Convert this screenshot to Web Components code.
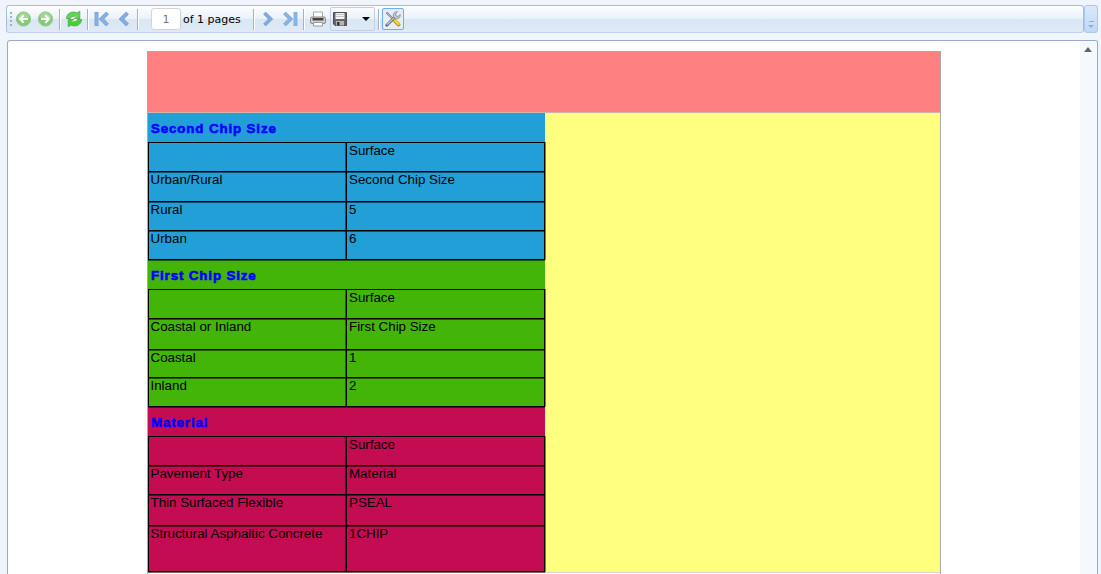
<!DOCTYPE html>
<html lang="en">
<head>
<meta charset="utf-8">
<title>Report Viewer</title>
<style>
    html, body {
        height: 100%;
        margin: 0;
        overflow: hidden;
    }
</style>
</head>
<body>
<report-viewer>
    <viewer-toolbar slot="toolbar"></viewer-toolbar>
    <report-page>
        <chip-table heading="Second Chip Size" color="#219fd6" rows="29 30 29 29"
            cells="|Surface|Urban/Rural|Second Chip Size|Rural|5|Urban|6"></chip-table>
        <chip-table heading="First Chip Size" color="#43b408" rows="29 31 28 29"
            cells="|Surface|Coastal or Inland|First Chip Size|Coastal|1|Inland|2"></chip-table>
        <chip-table heading="Material" color="#c40c53" rows="29 29 31 46"
            cells="|Surface|Pavement Type|Material|Thin Surfaced Flexible|PSEAL|Structural Asphaltic Concrete|1CHIP"></chip-table>
    </report-page>
</report-viewer>

<script>
const ICONS = {
    back: `<circle cx="7.5" cy="8" r="7.1" fill="#83cc72" stroke="#9cc29c"/><path d="M2 7a5.5 5.5 0 0 1 11 0z" fill="#a0d890"/><path d="M12 8H4.500M7.700 4.200L4 8l3.700 3.800" fill="none" stroke="#fff" stroke-width="2"/>`,
    forward: `<circle cx="7.5" cy="8" r="7.1" fill="#83cc72" stroke="#9cc29c"/><path d="M2 7a5.5 5.500 0 0 1 11 0z" fill="#a0d890"/><path d="M3 8h7.500M7.300 4.200L11 8l-3.700 3.800" fill="none" stroke="#fff" stroke-width="2"/>`,
    refresh: `<path d="M.5 7.500C.5 2.500 6-.5 11 2l2.800-1.800V7.500H7.500l2-2C7.500 4.700 5 5.200 4.300 7.500z" fill="#5cdb4a" stroke="#5fa562" stroke-width=".9"/><path d="M15.500 8.500c0 5-5.500 8-10.500 5.500l-2.800 1.800V8.500h6.300l-2 2c2 .8 4.500.3 5.200-2z" fill="#3fd52c" stroke="#5fa562" stroke-width=".9"/><path d="M5.500 7.500h2.200l2-2M10.500 8.500H8.300l-2 2" fill="none" stroke="#fff"/>`,
    first: `<path d="M2.500 1v14M13.500 2L7.500 8l6 6" fill="none" stroke="#7391bd" stroke-width="3.800"/><path d="M2.500 1.500v13M13.500 2L7.500 8l6 6" fill="none" stroke="#86b1e5" stroke-width="2.600"/>`,
    prev: `<path d="M11.500 2L5.500 8l6 6" fill="none" stroke="#6a8cbf" stroke-width="3.800"/><path d="M11.500 2L5.500 8l6 6" fill="none" stroke="#82b0e8" stroke-width="2.600"/>`,
    next: `<path d="M4.500 2l6 6l-6 6" fill="none" stroke="#8fa3c1" stroke-width="3.800"/><path d="M4.500 2l6 6l-6 6" fill="none" stroke="#7aace5" stroke-width="2.700"/>`,
    last: `<path d="M13.500 1v14M2.500 2l6 6l-6 6" fill="none" stroke="#8fa3c1" stroke-width="3.800"/><path d="M13.500 1.500v13M2.500 2l6 6l-6 6" fill="none" stroke="#84b5ea" stroke-width="2.700"/>`,
    print: `<path d="M3.500 1h9v6h-9z" fill="#fff" stroke="#aaa"/><rect x=".5" y="6" width="15" height="6.500" rx="1.500" fill="#d4d1ce" stroke="#888"/><path d="M2.500 7h11v2.500h-11z" fill="#444"/><path d="M3.500 11.500h9V15h-9z" fill="#fff" stroke="#999"/>`,
    save: `<path d="M1.500 1.500h13v13H3l-1.500-1.500z" fill="#666" stroke="#4c4c4c"/><path d="M3.500 2h9v6h-9z" fill="#f4f4f4"/><path d="M4 3.500h8M4 5.500h8" stroke="#c4c4c4"/><path d="M4 10h8v4.500H4z" fill="#b5b5b5"/><path d="M5 11h2.500v3.500H5z" fill="#333"/>`,
    tools: `<path d="M1.500 1.500L8.500 8.500" stroke="#777" stroke-width="1.800"/><path d="M2 2l6.500 6.500" stroke="#ddd" stroke-width=".7"/><path d="M9.500 9.500l4 4" stroke="#a48820" stroke-width="3.800" stroke-linecap="round"/><path d="M9.700 9.300l3.800 3.800" stroke="#ffd428" stroke-width="2.400" stroke-linecap="round"/><path d="M1.800 14.200L10 6" stroke="#666" stroke-width="2.800" stroke-linecap="round"/><path d="M2 13.800L10 6" stroke="#c9c9c9" stroke-width="1.200"/><path d="M12.500.8a3.500 3.500 0 0 0-4 4.700L10.500 7.500a3.500 3.500 0 0 0 4.700-4L13 5.500 11 5l-.5-2z" fill="#ccc" stroke="#888" stroke-width=".8"/>`
}

class ToolIcon extends HTMLElement {
    constructor() {
        super();
        this.attachShadow({ mode: 'open' })
    }

    connectedCallback() {
        this.shadowRoot.innerHTML = `
            <style>
                :host { display: block; flex: none; width: 16px; height: 16px; }
                svg { display: block; width: 100%; height: 100%; }
            </style>
            <svg viewBox="0 0 16 16" aria-hidden="true">${ICONS[this.getAttribute('name')]}</svg>
        `
    }
}

class ViewerToolbar extends HTMLElement {
    constructor() {
        super();
        this.attachShadow({ mode: 'open' }).innerHTML = `
            <style>
                :host {
                    display: flex;
                    height: 28px;
                    margin-right: 1px;
                    font: 11px "DejaVu Sans", sans-serif;
                    color: #000;
                }
                .bar {
                    flex: 1;
                    box-sizing: border-box;
                    display: flex;
                    align-items: center;
                    border: 1px solid #a9bfd8;
                    border-bottom-color: #bdd2ea;
                    border-radius: 3px;
                    background: linear-gradient(#fdfeff, #eaf2fa 48%, #dae6f3 52%, #dfeaf6);
                }
                .grip {
                    width: 2px;
                    height: 14px;
                    margin: 0 4px 0 3px;
                    background: repeating-linear-gradient(#a0b2ca 0 2px, transparent 2px 4px);
                }
                i {
                    width: 1px;
                    height: 21px;
                    background: #a2b2c8;
                    border-right: 1px solid #fff;
                }
                input {
                    box-sizing: border-box;
                    width: 30px;
                    height: 22px;
                    margin: 0 2px 0 12px;
                    padding: 0;
                    border: 1px solid #d5d5d5;
                    border-radius: 3px;
                    background: #fff;
                    color: #777;
                    font: inherit;
                    text-align: center;
                }
                .save {
                    box-sizing: border-box;
                    display: flex;
                    align-items: center;
                    width: 45px;
                    height: 24px;
                    margin: 0 3px 0 4px;
                    padding-left: 1px;
                    border: 1px solid #bfd0e5;
                    border-radius: 2px;
                }
                .arrow {
                    margin-left: 14px;
                    border: 4px solid transparent;
                    border-top-color: #000;
                    border-bottom: 0;
                }
                .active {
                    box-sizing: border-box;
                    width: 22px;
                    height: 22px;
                    margin-left: 2px;
                    padding: 2px;
                    border: 1px solid #6facf3;
                    border-radius: 2px;
                    background: #e3eefb;
                }
                .overflow {
                    display: flex;
                    flex-direction: column;
                    align-items: center;
                    justify-content: flex-end;
                    box-sizing: border-box;
                    width: 14px;
                    padding-bottom: 4px;
                    gap: 3px;
                    border: 1px solid #a9c6eb;
                    border-radius: 3px;
                    background: linear-gradient(#dbe9fa, #bfd7f7);
                }
                .overflow b { width: 5px; height: 1px; background: #91aed1; }
                .overflow u { border: 3px solid transparent; border-top-color: #91aed1; border-bottom: 0; }
            </style>
            <div class="bar">
                <div class="grip"></div>
                <tool-icon name="back"></tool-icon>
                <tool-icon name="forward" style="margin:0 5px 0 6px"></tool-icon>
                <i></i>
                <tool-icon name="refresh" style="margin:0 5px"></tool-icon>
                <i></i>
                <tool-icon name="first" style="margin:0 6px 0 5px"></tool-icon>
                <tool-icon name="prev" style="margin-right:5px"></tool-icon>
                <i></i>
                <input value="1" aria-label="Page">
                <span>of 1 pages</span>
                <i style="margin-left:12px"></i>
                <tool-icon name="next" style="margin:0 6px 0 5px"></tool-icon>
                <tool-icon name="last" style="margin-right:5px"></tool-icon>
                <i></i>
                <tool-icon name="print" style="margin-left:5px"></tool-icon>
                <div class="save"><tool-icon name="save"></tool-icon><span class="arrow"></span></div>
                <i></i>
                <div class="active"><tool-icon name="tools"></tool-icon></div>
            </div>
            <div class="overflow"><b></b><u></u></div>
        `
    }
}

class ReportViewer extends HTMLElement {
    constructor() {
        super();
        this.attachShadow({ mode: 'open' }).innerHTML = `
            <style>
                :host {
                    display: flex;
                    flex-direction: column;
                    box-sizing: border-box;
                    height: 100%;
                    padding: 5px 2px 0 6px;
                    gap: 7px;
                    background: #f0f4fc;
                }
                .view {
                    flex: 1;
                    min-height: 0;
                    display: flex;
                    overflow: hidden;
                    margin: 0 1px;
                    border: 1px solid #9aaac5;
                    border-bottom: 0;
                    border-radius: 3px 3px 0 0;
                    background: #fff;
                }
                .content { flex: 1; padding: 10px 0 0 139px; }
                .scroll { width: 17px; padding-top: 6px; background: #f5f8fd; }
                .scroll::before {
                    content: "";
                    display: block;
                    width: 0;
                    margin-left: 4px;
                    border: 4px solid transparent;
                    border-top: 0;
                    border-bottom: 5px solid #666;
                }
            </style>
            <slot name="toolbar"></slot>
            <div class="view">
                <div class="content"><slot></slot></div>
                <div class="scroll"></div>
            </div>
        `
    }
}

class ReportPage extends HTMLElement {
    constructor() {
        super();
        this.attachShadow({ mode: 'open' }).innerHTML = `
            <style>
                :host {
                    display: block;
                    box-sizing: border-box;
                    width: 794px;
                    height: 600px;
                    border: 1px solid #a9a9a9;
                }
                header { height: 60px; background: #ff8080; border-bottom: 1px solid #d3b4aa; }
                .body { height: 459px; background: #ffff80; border-bottom: 1px solid #d3d3d3; }
            </style>
            <header></header>
            <div class="body"><slot></slot></div>
        `
    }
}

class ChipTable extends HTMLElement {
    constructor() {
        super();
        this.attachShadow({ mode: 'open' })
    }

    connectedCallback() {
        const cells = this.getAttribute('cells').split('|')
        const rows = this.getAttribute('rows').split(' ').map(height => `${height}px`).join(' ')
        this.shadowRoot.innerHTML = `
            <style>
                :host {
                    display: block;
                    width: 397px;
                    background: ${this.getAttribute('color')};
                    font: 13.33px/15px "Liberation Sans", Arial, sans-serif;
                    color: #000;
                }
                h2 {
                    box-sizing: border-box;
                    height: 29px;
                    margin: 0;
                    padding: 7px 0 0 3px;
                    color: #00f;
                    font: 900 13.33px/17px "Arial Black", "Liberation Sans", sans-serif;
                    letter-spacing: .87px;
                    -webkit-text-stroke: .6px #00f;
                }
                .grid {
                    display: grid;
                    grid-template-columns: 198px 199px;
                    grid-template-rows: ${rows};
                    border-top: 1px solid #000;
                    box-shadow: inset 1px 0 #000, 1px 0 rgba(0, 0, 0, .5);
                }
                .grid div {
                    padding: 0 0 0 2.5px;
                    box-shadow: inset 0 -1px #000, inset -1px 0 rgba(0, 0, 0, .45), 0 1px rgba(0, 0, 0, .5);
                    white-space: nowrap;
                }
                .grid div:nth-child(even) {
                    padding-left: 2px;
                    border: 1px solid #000;
                    border-width: 0 1px 0 1px;
                    box-shadow: inset 0 -1px #000, 0 1px rgba(0, 0, 0, .5);
                }
            </style>
            <h2>${this.getAttribute('heading')}</h2>
            <div class="grid">${cells.map(cell => `<div>${cell}</div>`).join('')}</div>
        `
    }
}

customElements.define('tool-icon', ToolIcon);
customElements.define('viewer-toolbar', ViewerToolbar);
customElements.define('report-viewer', ReportViewer);
customElements.define('report-page', ReportPage);
customElements.define('chip-table', ChipTable);
</script>
</body>
</html>
